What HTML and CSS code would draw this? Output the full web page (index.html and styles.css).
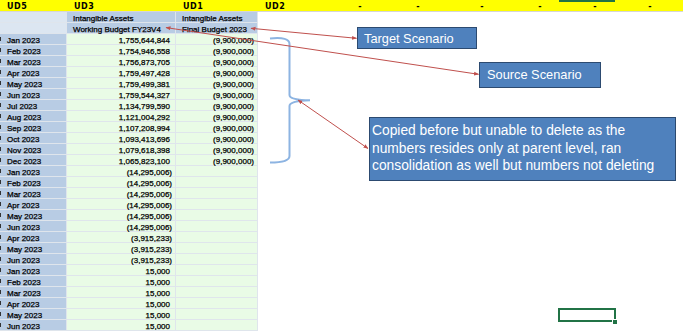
FILE: index.html
```html
<!DOCTYPE html>
<html>
<head>
<meta charset="utf-8">
<link rel="stylesheet" href="styles.css">
</head>
<body>
<div class="sheet">
  <div class="toprow">
    <div class="tc w67">UD5</div>
    <div class="tc w109">UD3</div>
    <div class="tc w82">UD1</div>
    <div class="tc w63">UD2</div>
    <div class="tc dash w59">-</div>
    <div class="tc dash w58">-</div>
    <div class="tc dash w64">-</div>
    <div class="tc dash w58">-</div>
    <div class="tc dash w55">-</div>
    <div class="tc dash w55">-</div>
    <div class="tc rest"></div>
  </div>
  <div class="grid">
    <div class="hd0"></div><div class="hd">Intangible Assets</div><div class="hd">Intangible Assets</div>
    <div class="hd0"></div><div class="hd">Working Budget FY23V4</div><div class="hd">Final Budget 2023</div>

    <div class="mo">Jan 2023</div><div class="num pos">1,755,644,844</div><div class="num">(9,900,000)</div>
    <div class="mo">Feb 2023</div><div class="num pos">1,754,946,558</div><div class="num">(9,900,000)</div>
    <div class="mo">Mar 2023</div><div class="num pos">1,756,873,705</div><div class="num">(9,900,000)</div>
    <div class="mo">Apr 2023</div><div class="num pos">1,759,497,428</div><div class="num">(9,900,000)</div>
    <div class="mo">May 2023</div><div class="num pos">1,759,499,381</div><div class="num">(9,900,000)</div>
    <div class="mo">Jun 2023</div><div class="num pos">1,759,544,327</div><div class="num">(9,900,000)</div>
    <div class="mo">Jul 2023</div><div class="num pos">1,134,799,590</div><div class="num">(9,900,000)</div>
    <div class="mo">Aug 2023</div><div class="num pos">1,121,004,292</div><div class="num">(9,900,000)</div>
    <div class="mo">Sep 2023</div><div class="num pos">1,107,208,994</div><div class="num">(9,900,000)</div>
    <div class="mo">Oct 2023</div><div class="num pos">1,093,413,696</div><div class="num">(9,900,000)</div>
    <div class="mo">Nov 2023</div><div class="num pos">1,079,618,398</div><div class="num">(9,900,000)</div>
    <div class="mo">Dec 2023</div><div class="num pos">1,065,823,100</div><div class="num">(9,900,000)</div>

    <div class="mo">Jan 2023</div><div class="num">(14,295,006)</div><div class="num"></div>
    <div class="mo">Feb 2023</div><div class="num">(14,295,006)</div><div class="num"></div>
    <div class="mo">Mar 2023</div><div class="num">(14,295,006)</div><div class="num"></div>
    <div class="mo">Apr 2023</div><div class="num">(14,295,006)</div><div class="num"></div>
    <div class="mo">May 2023</div><div class="num">(14,295,006)</div><div class="num"></div>
    <div class="mo">Jun 2023</div><div class="num">(14,295,006)</div><div class="num"></div>

    <div class="mo">Apr 2023</div><div class="num">(3,915,233)</div><div class="num"></div>
    <div class="mo">May 2023</div><div class="num">(3,915,233)</div><div class="num"></div>
    <div class="mo">Jun 2023</div><div class="num">(3,915,233)</div><div class="num"></div>

    <div class="mo">Jan 2023</div><div class="num pos">15,000</div><div class="num"></div>
    <div class="mo">Feb 2023</div><div class="num pos">15,000</div><div class="num"></div>
    <div class="mo">Mar 2023</div><div class="num pos">15,000</div><div class="num"></div>
    <div class="mo">Apr 2023</div><div class="num pos">15,000</div><div class="num"></div>
    <div class="mo">May 2023</div><div class="num pos">15,000</div><div class="num"></div>
    <div class="mo">Jun 2023</div><div class="num pos">15,000</div><div class="num"></div>
  </div>

  <svg class="overlay" width="683" height="332" viewBox="0 0 683 332">
    <defs>
      <marker id="ah" viewBox="0 0 10 10" refX="9" refY="5" markerWidth="5" markerHeight="5" orient="auto-start-reverse">
        <path d="M0,1 L10,5 L0,9 z" fill="#c0504d"/>
      </marker>
    </defs>
    <path class="brace" d="M270,38.5 Q289.5,36.5 289.5,44 L289.5,95 Q289.5,100 310,100.3 Q289.5,101 289.5,106 L289.5,156 Q289.5,162.5 270,162.5"/>
    <line class="arr" x1="251" y1="28.3" x2="356.5" y2="38.3" marker-start="url(#ah)" marker-end="url(#ah)"/>
    <line class="arr" x1="166" y1="27.6" x2="478.5" y2="74.3" marker-start="url(#ah)" marker-end="url(#ah)"/>
    <line class="arr" x1="298" y1="100" x2="368" y2="148.5" marker-start="url(#ah)" marker-end="url(#ah)"/>
  </svg>

  <div class="callout target">Target Scenario</div>
  <div class="callout source">Source Scenario</div>
  <div class="callout note">Copied before but unable to delete as the<br>numbers resides only at parent level, ran<br>consolidation as well but numbers not deleting</div>

  <div class="colmark"></div>
  <div class="selcell"><span class="handle"></span></div>
</div>
</body>
</html>
```
FILE: styles.css
```css
* { box-sizing: border-box; }
html, body { margin: 0; padding: 0; background: #ffffff; overflow: hidden; }
body { width: 683px; height: 332px; font-family: "Liberation Sans", Arial, sans-serif; }

.sheet { position: relative; width: 683px; height: 332px; overflow: hidden; background: #fff; }

.toprow {
  display: flex;
  height: 12px;
  background: #ffff00;
  border-bottom: 1px solid #d6d6d6;
  font: bold 8px/11px "DejaVu Sans", sans-serif;
  letter-spacing: 0.5px;
  color: #000;
}
.toprow .tc { flex: none; padding-left: 7px; padding-top: 1px; white-space: nowrap; }
.toprow .dash { text-align: right; padding-left: 0; padding-right: 18px; }
.w67 { width: 67px; }
.w109 { width: 109px; }
.w82 { width: 82px; }
.w63 { width: 63px; }
.w59 { width: 59px; }
.w58 { width: 58px; }
.w64 { width: 64px; }
.w55 { width: 55px; }
.toprow .rest { flex: 1; }

.grid {
  display: grid;
  grid-template-columns: 67px 109px 82px;
  grid-auto-rows: 11px;
  width: 258px;
  font-size: 8px;
  line-height: 10px;
  color: #000;
  -webkit-text-stroke: 0.25px #000;
}
.grid > div {
  height: 11px;
  padding-top: 1.5px;
  border-right: 1px solid #dfe5ec;
  border-bottom: 1px solid #dfe5ec;
  white-space: nowrap;
}
.hd0 { background: #dce6f1; }
.hd { background: #b8cce4; padding-left: 6px; }
.mo { background: #b8cce4; padding-left: 7px; position: relative; }
.mo::before {
  content: "";
  position: absolute;
  left: 0;
  top: 3px;
  width: 1px;
  height: 4px;
  background: #333;
}
.num { background: #e9fbe6; text-align: right; padding-right: 3px; }
.num.pos { padding-right: 5px; }

.overlay { position: absolute; left: 0; top: 0; pointer-events: none; }
.brace { fill: none; stroke: #8db4e2; stroke-width: 2; }
.arr { stroke: #c0504d; stroke-width: 1; }

.callout {
  position: absolute;
  background: #4f81bd;
  border: 1px solid #2c4a70;
  color: #ffffff;
  font-family: "Liberation Sans", Arial, sans-serif;
  font-size: 12.8px;
  line-height: 17.7px;
  white-space: nowrap;
}
.target { left: 357px; top: 27px; width: 120px; height: 22px; padding: 1.5px 0 0 6px; }
.source { left: 479px; top: 62px; width: 122px; height: 26px; padding: 3px 0 0 7px; }
.note { left: 369px; top: 117px; width: 307px; height: 64px; padding: 4px 0 0 2px; font-size: 13.8px; }

.colmark { position: absolute; left: 559px; top: 0; width: 56px; height: 2px; background: #217346; }
.selcell {
  position: absolute;
  left: 558px;
  top: 308px;
  width: 58px;
  height: 14px;
  border: 2px solid #217346;
}
.handle {
  position: absolute;
  right: -4px;
  bottom: -5px;
  width: 6px;
  height: 6px;
  background: #217346;
  border: 1px solid #fff;
}
```
